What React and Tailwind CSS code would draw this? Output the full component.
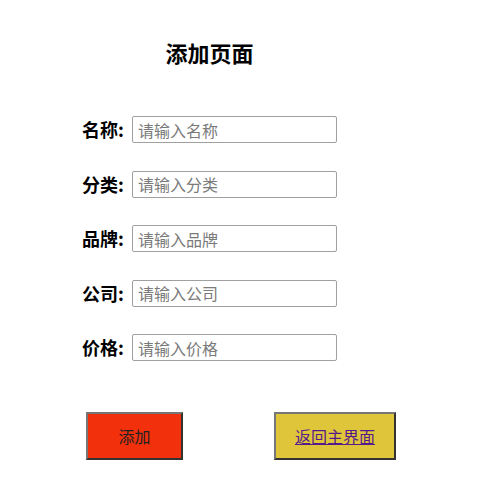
export default function App() {
  const rows = [
    ["名称", "请输入名称"],
    ["分类", "请输入分类"],
    ["品牌", "请输入品牌"],
    ["公司", "请输入公司"],
    ["价格", "请输入价格"],
  ];
  const font = { fontFamily: '"Noto Sans CJK SC", "Noto Sans", sans-serif' };
  return (
    <div className="w-[481px] h-[500px] bg-white" style={font}>
      <div className="w-[419px] pt-[36px] text-center text-[22px] leading-[33px] font-bold text-black">
        添加页面
      </div>
      <div className="mt-[47px] pl-[82px] flex flex-col gap-[27.5px]">
        {rows.map(([label, ph]) => (
          <div key={label} className="flex items-center h-[27px]">
            <span className="w-[50px] text-[18px] font-bold text-black leading-[27px]">{label}:</span>
            <input
              placeholder={ph}
              className="w-[205px] h-[27px] border border-[#a0a0a0] rounded-[2px] px-[5px] text-[16px] text-black placeholder:text-[#7a7a7a] outline-none"
            />
          </div>
        ))}
      </div>
      <div className="mt-[51px] pl-[86px] flex">
        <button className="w-[97px] h-[48px] bg-[#f2300c] border-2 border-t-[#767676] border-l-[#767676] border-r-[#333] border-b-[#333] text-[16px] text-[#222]">
          添加
        </button>
        <button className="ml-[91px] w-[122px] h-[48px] bg-[#dfc53a] border-2 border-t-[#767676] border-l-[#767676] border-r-[#333] border-b-[#333] text-[16px]">
          <a href="#" className="text-[#551a8b] underline">返回主界面</a>
        </button>
      </div>
    </div>
  );
}
